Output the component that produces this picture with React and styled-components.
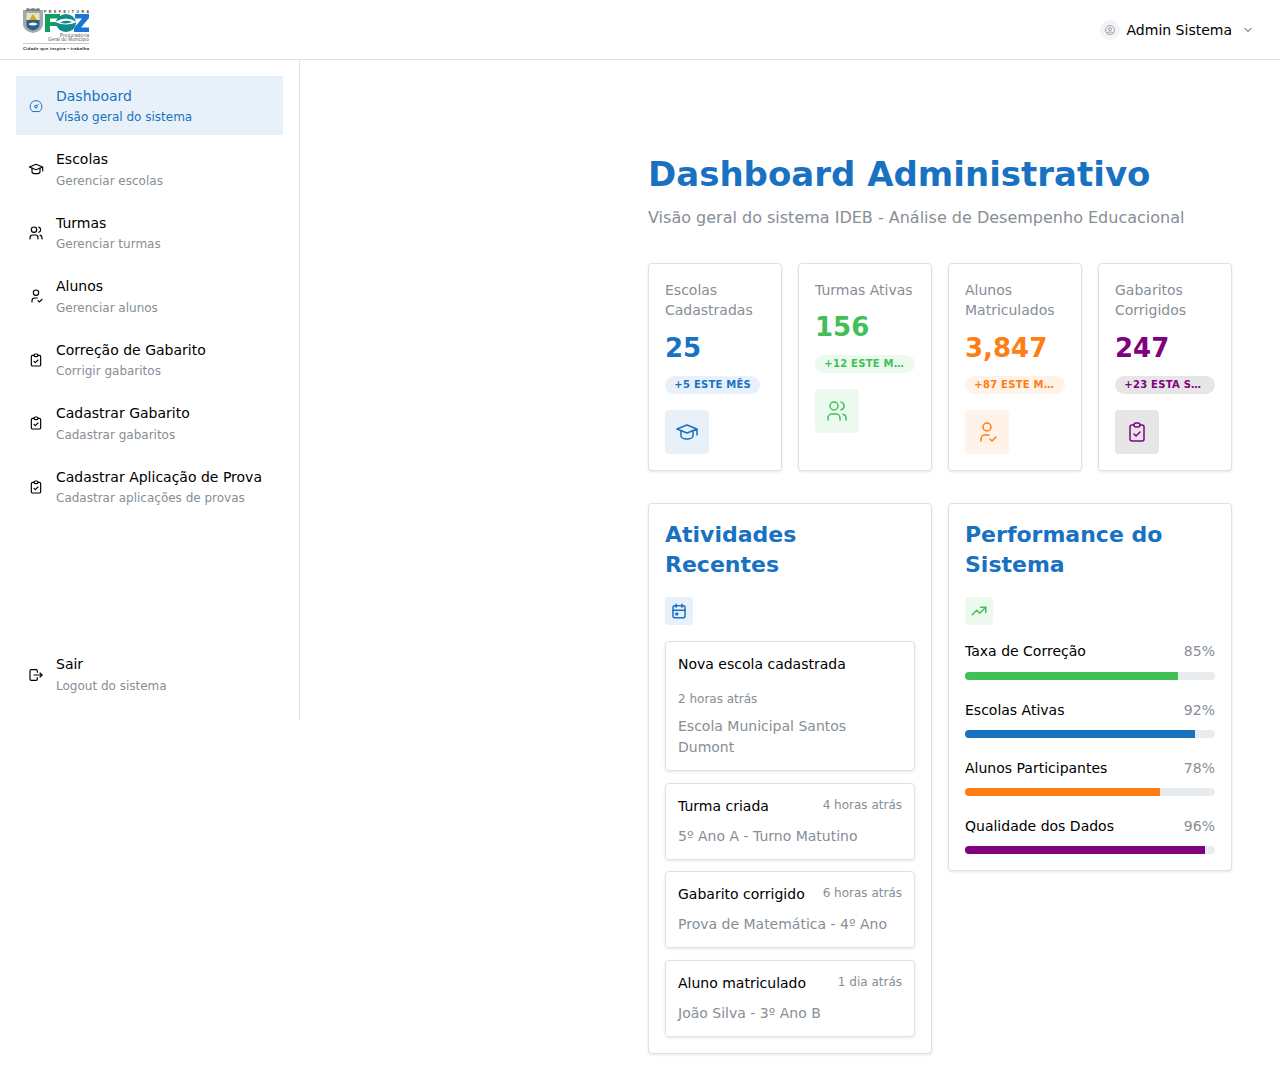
import React from 'react';
import styled, { createGlobalStyle } from 'styled-components';
import {
  TbDashboard,
  TbSchool,
  TbUsers,
  TbUserCheck,
  TbClipboardCheck,
  TbLogout,
  TbCalendarEvent,
  TbTrendingUp,
  TbUserCircle,
  TbChevronDown,
} from 'react-icons/tb';

const BLUE = '#1971c2';
const GREEN = '#40c057';
const ORANGE = '#fd7e14';
const PURPLE = '#800080';
const GREY = '#868e96';

const GlobalStyle = createGlobalStyle`
  html, body {
    margin: 0;
    background: #fff;
    font-family: "DejaVu Sans", sans-serif;
    color: #000;
  }
  * { box-sizing: border-box; }
`;

const Page = styled.div`
  width: 1280px;
  min-height: 1086px;
`;

const Header = styled.header`
  height: 60px;
  border-bottom: 1px solid #dee2e6;
  display: flex;
  align-items: center;
  justify-content: space-between;
  padding: 0 18px 0 22px;
`;

const UserButton = styled.div`
  display: flex;
  align-items: center;
  padding: 0 8px;
  font-size: 14px;
  gap: 7px;
`;

const Avatar = styled.div`
  width: 20px;
  height: 20px;
  border-radius: 50%;
  background: #f1f3f5;
  color: #868e96;
  display: flex;
  align-items: center;
  justify-content: center;
`;

const Chevron = styled.span`
  display: flex;
  margin-left: 3px;
  color: #343a40;
`;

const Body = styled.div`
  display: flex;
  align-items: flex-start;
`;

const Sidebar = styled.nav`
  width: 300px;
  height: 660px;
  flex: none;
  border-right: 1px solid #dee2e6;
  padding: 16px 16px 15.7px;
  display: flex;
  flex-direction: column;
`;

const NavList = styled.div`
  flex: 1;
  display: flex;
  flex-direction: column;
  gap: 4px;
`;

const NavItem = styled.div`
  display: flex;
  align-items: center;
  width: 267px;
  height: 59.5px;
  padding: 0 12px;
  color: #000;
`;

const ActiveNavItem = styled(NavItem)`
  height: 59px;
  margin-bottom: 0.5px;
  padding-top: 0.5px;
  background: #e8f1f9;
  color: ${BLUE};
`;

const NavIcon = styled.span`
  display: flex;
  width: 16px;
  margin-right: 12px;
`;

const NavText = styled.div`
  display: flex;
  flex-direction: column;
`;

const NavLabel = styled.span`
  font-size: 14px;
  line-height: 21px;
`;

const NavHint = styled.span`
  font-size: 12px;
  line-height: 18px;
  margin-top: 1.5px;
  color: ${(p) => (p.$active ? BLUE : GREY)};
`;

const Main = styled.main`
  flex: 1;
  padding: 92px 48px 32px 348px;
`;

const Title = styled.h1`
  margin: 0;
  font-size: 34px;
  line-height: 44px;
  font-weight: 700;
  color: ${BLUE};
`;

const Subtitle = styled.p`
  margin: 10px 0 0;
  font-size: 16px;
  line-height: 24px;
  color: ${GREY};
`;

const StatGrid = styled.div`
  display: grid;
  grid-template-columns: repeat(4, 134px);
  gap: 16px;
  margin-top: 33px;
`;

const Card = styled.div`
  background: #fff;
  border: 1px solid #dee2e6;
  border-radius: 4px;
  box-shadow: 0 1px 3px rgba(0, 0, 0, 0.1);
  padding: 16px;
`;

const StatCard = styled(Card)`
  height: 208px;
  display: flex;
  flex-direction: column;
  align-items: flex-start;
`;

const StatLabel = styled.div`
  font-size: 14px;
  line-height: 20.4px;
  color: ${GREY};
`;

const StatValue = styled.div`
  font-size: 26px;
  line-height: 34px;
  font-weight: 700;
  margin-top: 9.8px;
  color: ${(p) => p.$color};
`;

const Badge = styled.div`
  height: 18px;
  max-width: 100%;
  padding: 0 9.33px;
  border-radius: 9px;
  font-size: 10px;
  line-height: 18px;
  font-weight: 700;
  letter-spacing: 0.25px;
  text-transform: uppercase;
  white-space: nowrap;
  overflow: hidden;
  text-overflow: ellipsis;
  margin-top: 11.2px;
  color: ${(p) => p.$color};
  background: ${(p) => p.$bg};
  width: ${(p) => (p.$fit ? 'auto' : '100%')};
`;

const IconTile = styled.div`
  width: ${(p) => p.$size}px;
  height: ${(p) => p.$size}px;
  border-radius: 4px;
  display: flex;
  align-items: center;
  justify-content: center;
  color: ${(p) => p.$color};
  background: ${(p) => p.$bg};
`;

const StatTile = styled(IconTile)`
  margin-top: 16px;
`;

const PanelGrid = styled.div`
  display: grid;
  grid-template-columns: repeat(2, 284px);
  gap: 16px;
  margin-top: 32px;
  align-items: start;
`;

const PanelTitle = styled.h3`
  margin: 0;
  font-size: 22px;
  line-height: 30px;
  font-weight: 700;
  color: ${BLUE};
`;

const PanelTile = styled(IconTile)`
  margin-top: 17px;
`;

const ActivityList = styled.div`
  display: flex;
  flex-direction: column;
  gap: 11.7px;
  margin-top: 16px;
`;

const Activity = styled.div`
  border: 1px solid #dee2e6;
  border-radius: 4px;
  box-shadow: 0 1px 3px rgba(0, 0, 0, 0.1);
  padding: 12px;
`;

const ActivityTop = styled.div`
  display: flex;
  flex-wrap: wrap;
  justify-content: space-between;
  align-items: flex-start;
  row-gap: 14.5px;
  column-gap: 12px;
`;

const ActivityName = styled.div`
  font-size: 14px;
  line-height: 21px;
`;

const ActivityTime = styled.div`
  font-size: 12px;
  line-height: 18px;
  color: ${GREY};
`;

const ActivityDesc = styled.div`
  font-size: 14px;
  line-height: 21px;
  margin-top: 8.8px;
  color: ${GREY};
`;

const Metrics = styled.div`
  display: flex;
  flex-direction: column;
  gap: 19.8px;
  margin-top: 16.4px;
`;

const MetricHead = styled.div`
  display: flex;
  justify-content: space-between;
  font-size: 14px;
  line-height: 21px;
`;

const MetricPct = styled.span`
  color: ${GREY};
`;

const Track = styled.div`
  height: 8px;
  margin-top: 9.4px;
  border-radius: 4px;
  background: #e9ecef;
  overflow: hidden;
`;

const Fill = styled.div`
  height: 100%;
  background: ${(p) => p.$color};
`;

const Logo = () => (
  <svg width="68" height="44" viewBox="0 0 68 44" style={{ display: 'block' }}>
    <path d="M1 2 h20 v14 q0 7 -10 9 q-10 -2 -10 -9 z" fill="#a3a8ad" />
    <path d="M4 1 l2 -1 l2 1 l3 -1 l3 1 l2 -1 l2 1 v2 h-14z" fill="#7b8187" />
    <rect x="4.500" y="5" width="13" height="7" fill="#e8e4c0" />
    <path d="M7 12 l4 -6 l4 6z" fill="#d0ab2a" />
    <path d="M4.500 12 h13 v5 q0 3.500 -6.500 5.500 q-6.500 -2 -6.500 -5.500 z" fill="#2a5d88" />
    <path d="M6 16 q5 -3 10 0 q-5 3 -10 0z" fill="#f4f6f8" />
    <text x="22" y="4.500" fontFamily="Liberation Sans" fontSize="3.500" fontWeight="700" textLength="45" fill="#333">PREFEITURA</text>
    <path d="M23 6h15v4.500h-10v3.500h8v4h-8v6h-5z" fill="#10a05c" />
    <ellipse cx="44" cy="15" rx="10" ry="9" fill="#108a8c" />
    <path d="M33 14 q11 -7 22 0 q-11 5 -22 0z" fill="#fff" />
    <path d="M38 14.500 q6 -3 12 -0.500 q-6 2.500 -12 0.500z" fill="#108a8c" />
    <path d="M53 6h14v4l-8 9.500h8v4.500h-15v-4l8 -9.500h-7z" fill="#1976d2" />
    <text x="67" y="28.800" textAnchor="end" fontFamily="Liberation Sans" fontSize="4.500" textLength="29" fill="#555">Procuradoria</text>
    <text x="67" y="33" textAnchor="end" fontFamily="Liberation Sans" fontSize="4.500" textLength="41" fill="#555">Geral do Município</text>
    <rect x="1" y="35" width="66" height="0.800" fill="#bbb" />
    <text x="1" y="42" fontFamily="Liberation Sans" fontSize="4.200" fontWeight="700" textLength="66" fill="#222">Cidade que inspira • trabalha</text>
  </svg>
);

const nav = [
  { label: 'Escolas', hint: 'Gerenciar escolas', Icon: TbSchool },
  { label: 'Turmas', hint: 'Gerenciar turmas', Icon: TbUsers },
  { label: 'Alunos', hint: 'Gerenciar alunos', Icon: TbUserCheck },
  { label: 'Correção de Gabarito', hint: 'Corrigir gabaritos', Icon: TbClipboardCheck },
  { label: 'Cadastrar Gabarito', hint: 'Cadastrar gabaritos', Icon: TbClipboardCheck },
  { label: 'Cadastrar Aplicação de Prova', hint: 'Cadastrar aplicações de provas', Icon: TbClipboardCheck },
];

const stats = [
  { label: 'Escolas Cadastradas', value: '25', badge: '+5 este mês', color: BLUE, bg: '#e8f1f9', Icon: TbSchool, fit: true },
  { label: 'Turmas Ativas', value: '156', badge: '+12 este mês', color: GREEN, bg: '#ecf9ee', Icon: TbUsers },
  { label: 'Alunos Matriculados', value: '3,847', badge: '+87 este mês', color: ORANGE, bg: '#fff2e8', Icon: TbUserCheck },
  { label: 'Gabaritos Corrigidos', value: '247', badge: '+23 esta semana', color: PURPLE, bg: '#e6e6e6', Icon: TbClipboardCheck },
];

const activities = [
  { name: 'Nova escola cadastrada', time: '2 horas atrás', desc: 'Escola Municipal Santos Dumont' },
  { name: 'Turma criada', time: '4 horas atrás', desc: '5º Ano A - Turno Matutino' },
  { name: 'Gabarito corrigido', time: '6 horas atrás', desc: 'Prova de Matemática - 4º Ano' },
  { name: 'Aluno matriculado', time: '1 dia atrás', desc: 'João Silva - 3º Ano B' },
];

const metrics = [
  { label: 'Taxa de Correção', pct: 85, color: GREEN },
  { label: 'Escolas Ativas', pct: 92, color: BLUE },
  { label: 'Alunos Participantes', pct: 78, color: ORANGE },
  { label: 'Qualidade dos Dados', pct: 96, color: PURPLE },
];

export default function App() {
  return (
    <Page>
      <GlobalStyle />
      <Header>
        <Logo />
        <UserButton>
          <Avatar>
            <TbUserCircle size={12} strokeWidth={1.5} />
          </Avatar>
          <span>Admin Sistema</span>
          <Chevron>
            <TbChevronDown size={12} />
          </Chevron>
        </UserButton>
      </Header>
      <Body>
        <Sidebar>
          <NavList>
            <ActiveNavItem>
              <NavIcon>
                <TbDashboard size={16} strokeWidth={1.5} />
              </NavIcon>
              <NavText>
                <NavLabel>Dashboard</NavLabel>
                <NavHint $active>Visão geral do sistema</NavHint>
              </NavText>
            </ActiveNavItem>
            {nav.map(({ label, hint, Icon }) => (
              <NavItem key={label}>
                <NavIcon>
                  <Icon size={16} strokeWidth={1.75} />
                </NavIcon>
                <NavText>
                  <NavLabel>{label}</NavLabel>
                  <NavHint>{hint}</NavHint>
                </NavText>
              </NavItem>
            ))}
          </NavList>
          <NavItem>
            <NavIcon>
              <TbLogout size={16} strokeWidth={1.75} />
            </NavIcon>
            <NavText>
              <NavLabel>Sair</NavLabel>
              <NavHint>Logout do sistema</NavHint>
            </NavText>
          </NavItem>
        </Sidebar>
        <Main>
          <Title>Dashboard Administrativo</Title>
          <Subtitle>Visão geral do sistema IDEB - Análise de Desempenho Educacional</Subtitle>
          <StatGrid>
            {stats.map(({ label, value, badge, color, bg, Icon, fit }) => (
              <StatCard key={label}>
                <StatLabel>{label}</StatLabel>
                <StatValue $color={color}>{value}</StatValue>
                <Badge $color={color} $bg={bg} $fit={fit}>
                  {badge}
                </Badge>
                <StatTile $size={44} $color={color} $bg={bg}>
                  <Icon size={24} strokeWidth={1.5} />
                </StatTile>
              </StatCard>
            ))}
          </StatGrid>
          <PanelGrid>
            <Card>
              <PanelTitle>Atividades Recentes</PanelTitle>
              <PanelTile $size={28} $color={BLUE} $bg="#e8f1f9">
                <TbCalendarEvent size={18} />
              </PanelTile>
              <ActivityList>
                {activities.map(({ name, time, desc }) => (
                  <Activity key={name}>
                    <ActivityTop>
                      <ActivityName>{name}</ActivityName>
                      <ActivityTime>{time}</ActivityTime>
                    </ActivityTop>
                    <ActivityDesc>{desc}</ActivityDesc>
                  </Activity>
                ))}
              </ActivityList>
            </Card>
            <Card>
              <PanelTitle>Performance do Sistema</PanelTitle>
              <PanelTile $size={28} $color={GREEN} $bg="#ecf9ee">
                <TbTrendingUp size={18} />
              </PanelTile>
              <Metrics>
                {metrics.map(({ label, pct, color }) => (
                  <div key={label}>
                    <MetricHead>
                      <span>{label}</span>
                      <MetricPct>{pct}%</MetricPct>
                    </MetricHead>
                    <Track>
                      <Fill $color={color} style={{ width: `${pct}%` }} />
                    </Track>
                  </div>
                ))}
              </Metrics>
            </Card>
          </PanelGrid>
        </Main>
      </Body>
    </Page>
  );
}
